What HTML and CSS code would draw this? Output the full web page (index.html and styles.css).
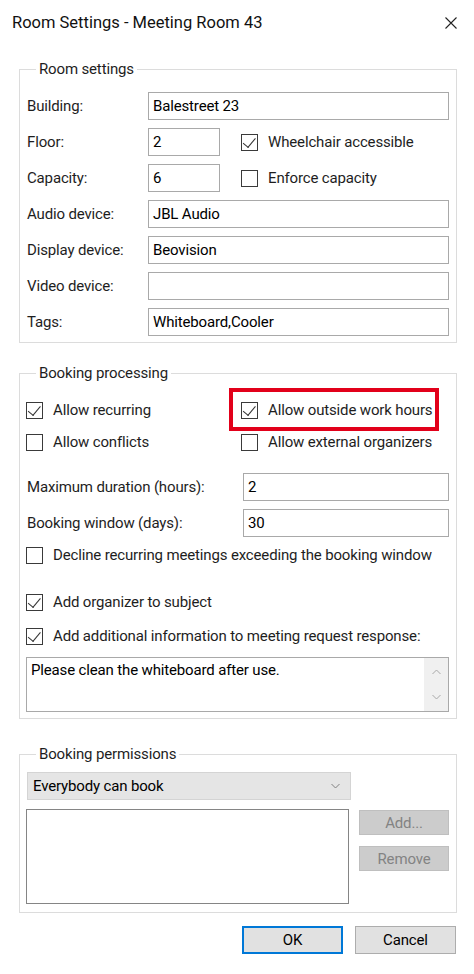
FILE: index.html
```html
<!DOCTYPE html>
<html lang="en">
<head>
<meta charset="utf-8">
<title>Room Settings - Meeting Room 43</title>
<link rel="stylesheet" href="styles.css">
</head>
<body>
<div class="dialog">
  <div class="titlebar">
    <span class="title">Room Settings - Meeting Room 43</span>
    <svg class="close" width="12" height="12" viewBox="0 0 12 12"><path d="M0.5 0.5L11.5 11.5M11.5 0.5L0.5 11.5" stroke="#222" stroke-width="1.1" fill="none"/></svg>
  </div>

  <fieldset class="group g-room">
    <legend>Room settings</legend>
    <div class="form-grid">
      <span class="label">Building:</span>
      <div class="field">Balestreet 23</div>

      <span class="label">Floor:</span>
      <div class="inline-row">
        <div class="field short">2</div>
        <div class="check"><span class="box on"></span><span>Wheelchair accessible</span></div>
      </div>

      <span class="label">Capacity:</span>
      <div class="inline-row">
        <div class="field short">6</div>
        <div class="check"><span class="box"></span><span>Enforce capacity</span></div>
      </div>

      <span class="label">Audio device:</span>
      <div class="field">JBL Audio</div>

      <span class="label">Display device:</span>
      <div class="field">Beovision</div>

      <span class="label">Video device:</span>
      <div class="field"></div>

      <span class="label">Tags:</span>
      <div class="field">Whiteboard,Cooler</div>
    </div>
  </fieldset>

  <fieldset class="group g-proc">
    <legend>Booking processing</legend>
    <div class="check-grid">
      <div class="check"><span class="box on"></span><span>Allow recurring</span></div>
      <div class="check highlighted"><span class="box on"></span><span>Allow outside work hours</span></div>
      <div class="check"><span class="box"></span><span>Allow conflicts</span></div>
      <div class="check"><span class="box"></span><span>Allow external organizers</span></div>
    </div>
    <div class="num-grid">
      <span class="label">Maximum duration (hours):</span>
      <div class="field">2</div>
      <span class="label">Booking window (days):</span>
      <div class="field">30</div>
    </div>
    <div class="check row-decline"><span class="box"></span><span>Decline recurring meetings exceeding the booking window</span></div>
    <div class="check row-organizer"><span class="box on"></span><span>Add organizer to subject</span></div>
    <div class="check row-additional"><span class="box on"></span><span>Add additional information to meeting request response:</span></div>
    <div class="memo">
      <div class="memo-text">Please clean the whiteboard after use.</div>
      <div class="scrollbar">
        <svg width="9" height="6" viewBox="0 0 9 6"><path d="M0.5 5L4.5 1L8.5 5" stroke="#a8a8a8" stroke-width="1" fill="none"/></svg>
        <svg width="9" height="6" viewBox="0 0 9 6"><path d="M0.5 1L4.5 5L8.5 1" stroke="#a8a8a8" stroke-width="1" fill="none"/></svg>
      </div>
    </div>
  </fieldset>

  <fieldset class="group g-perm">
    <legend>Booking permissions</legend>
    <div class="select">
      <span>Everybody can book</span>
      <svg width="9" height="6" viewBox="0 0 9 6"><path d="M0.5 1L4.5 5L8.5 1" stroke="#808080" stroke-width="1" fill="none"/></svg>
    </div>
    <div class="perm-row">
      <div class="listbox"></div>
      <div class="side-buttons">
        <div class="btn disabled">Add...</div>
        <div class="btn disabled">Remove</div>
      </div>
    </div>
  </fieldset>

  <div class="footer">
    <div class="btn primary">OK</div>
    <div class="btn">Cancel</div>
  </div>
</div>
</body>
</html>
```

FILE: styles.css
```css
*, *::before, *::after { box-sizing: border-box; }

html, body {
  margin: 0;
  padding: 0;
  background: #ffffff;
}

body {
  font-family: Roboto, "Noto Sans", sans-serif;
  font-size: 15px;
  letter-spacing: -0.15px;
  color: #1e1e1e;
}

.dialog {
  width: 474px;
  height: 974px;
  display: flex;
  flex-direction: column;
  background: #fff;
}

.titlebar {
  display: flex;
  align-items: center;
  justify-content: space-between;
  height: 24px;
  margin: 11px 17px 24px 12px;
}

.title {
  font-size: 16.5px;
  line-height: 24px;
  letter-spacing: 0;
  color: #111;
}

.group {
  margin: 0 17px 0 19px;
  padding: 13px 7px 6px 7px;
  border: 1px solid #dcdcdc;
  min-width: 0;
}

.group legend {
  padding: 0 3px;
  margin-left: 9px;
  line-height: 20px;
  font-size: 15px;
  color: #1e1e1e;
}

.label {
  line-height: 28px;
  white-space: nowrap;
}

.field {
  height: 28px;
  border: 1px solid #a9a9a9;
  background: #fff;
  padding: 0 4px;
  line-height: 26px;
  color: #000;
  white-space: nowrap;
}

.form-grid {
  display: grid;
  grid-template-columns: 121px 1fr;
  row-gap: 8px;
}

.inline-row {
  display: flex;
  align-items: center;
  gap: 21px;
}

.field.short {
  width: 72px;
}

.check {
  display: flex;
  align-items: center;
  gap: 10px;
  height: 24px;
  white-space: nowrap;
}

.box {
  width: 17px;
  height: 17px;
  flex: none;
  border: 1.5px solid #3a3a3a;
  background: #fff;
  position: relative;
}

.box.on::after {
  content: "";
  position: absolute;
  left: 4px;
  top: 0px;
  width: 6.5px;
  height: 11.5px;
  border-right: 1.5px solid #333;
  border-bottom: 1.5px solid #333;
  transform: rotate(40deg);
}

/* Booking processing */
.g-proc {
  margin-top: 20px;
  padding-top: 15px;
}

.check-grid {
  display: grid;
  grid-template-columns: 215px 1fr;
  row-gap: 8px;
}

.check-grid .check {
  margin-left: -1px;
}

.highlighted {
  position: relative;
}

.highlighted::before {
  content: "";
  position: absolute;
  left: -12px;
  width: 210px;
  top: -10px;
  bottom: -9px;
  border: 4px solid #e2001a;
  pointer-events: none;
}

.num-grid {
  display: grid;
  grid-template-columns: 216px 1fr;
  row-gap: 8px;
  margin-top: 19px;
}

.row-decline {
  margin-top: 6px;
  margin-left: -1px;
}

.row-organizer {
  margin-top: 23px;
  margin-left: -1px;
}

.row-additional {
  margin-top: 10px;
  margin-left: -1px;
}

.memo {
  display: flex;
  height: 55px;
  margin-top: 9px;
  margin-left: -1px;
  border: 1px solid #a9a9a9;
  background: #fff;
}

.memo-text {
  flex: 1;
  padding: 2px 4px;
  line-height: 20px;
  color: #000;
}

.scrollbar {
  width: 24px;
  background: #f0f0f0;
  display: flex;
  flex-direction: column;
  align-items: center;
  justify-content: space-between;
  padding: 11px 0 11px;
}

/* Booking permissions */
.g-perm {
  margin-top: 25px;
  padding-top: 8px;
  padding-bottom: 8px;
}

.select {
  width: 324px;
  height: 28px;
  display: flex;
  align-items: center;
  justify-content: space-between;
  padding: 0 10px 0 5px;
  background: #e5e5e5;
  border: 1px solid #d4d4d4;
  color: #000;
}

.perm-row {
  display: flex;
  gap: 10px;
  margin-top: 9px;
}

.listbox {
  width: 325px;
  height: 95px;
  margin-left: -1px;
  border: 1px solid #858585;
  background: #fff;
}

.side-buttons {
  display: flex;
  flex-direction: column;
  gap: 11px;
  padding-top: 1px;
}

.btn {
  width: 90px;
  height: 25px;
  display: flex;
  align-items: center;
  justify-content: center;
  background: #e1e1e1;
  border: 1px solid #adadad;
  color: #000;
}

.btn.disabled {
  background: #cccccc;
  border-color: #bfbfbf;
  color: #838383;
}

.footer {
  display: flex;
  justify-content: flex-end;
  gap: 12px;
  margin: 13px 18px 0 0;
}

.footer .btn {
  width: 101px;
  height: 28px;
}

.btn.primary {
  border: 2px solid #0078d7;
}
```
